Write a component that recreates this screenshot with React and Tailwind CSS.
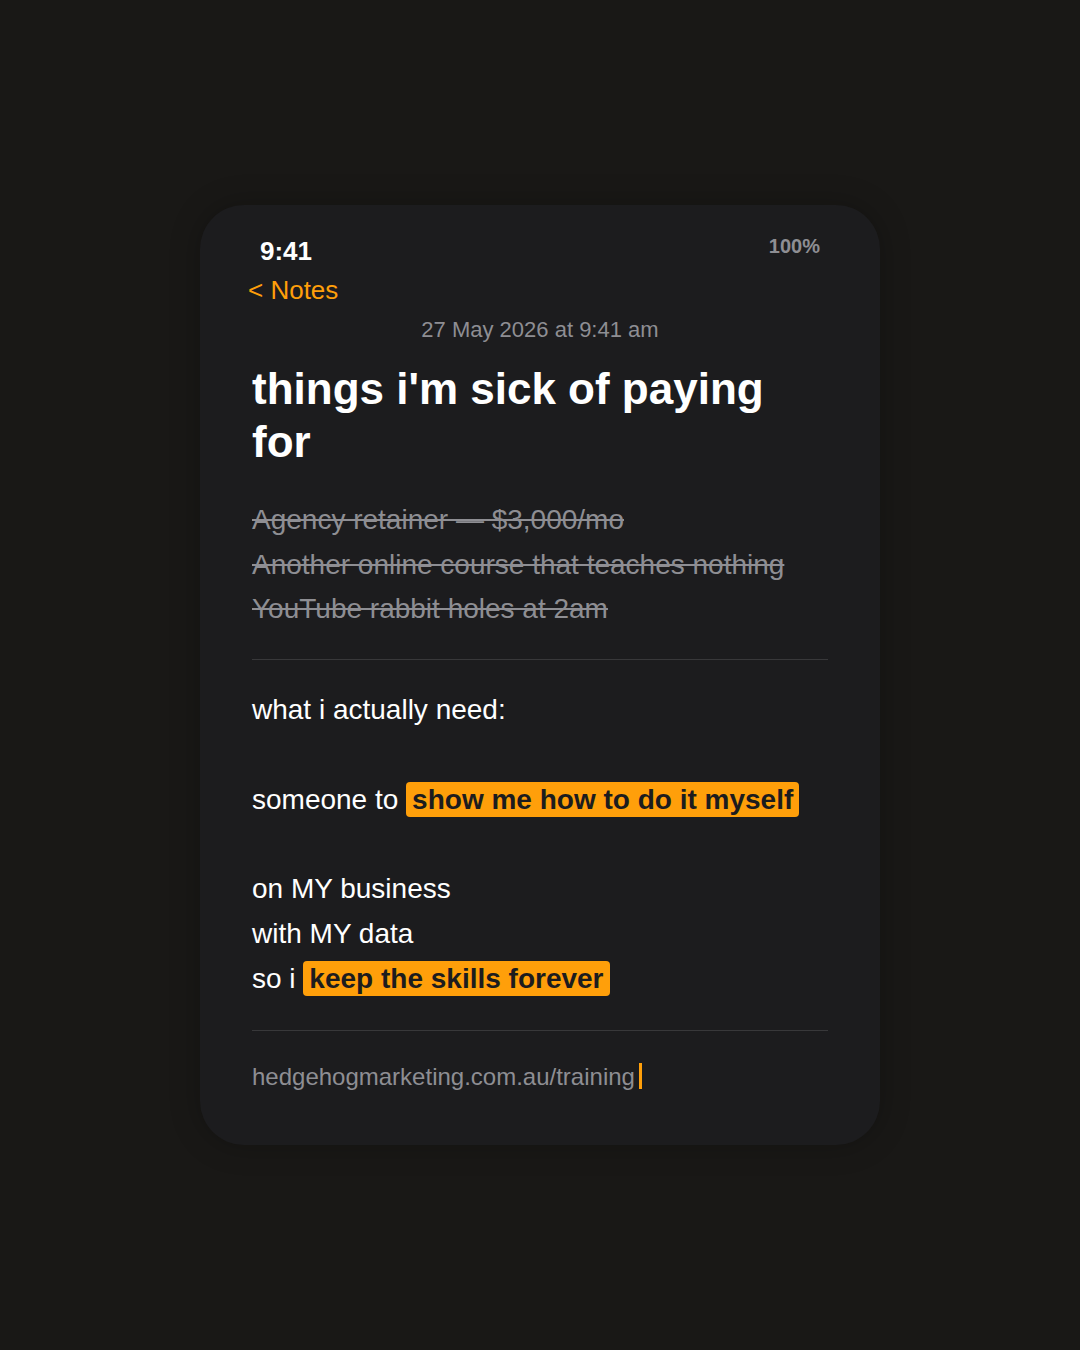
export default function App() {
  const struck = [
    "Agency retainer — $3,000/mo",
    "Another online course that teaches nothing",
    "YouTube rabbit holes at 2am",
  ];

  return (
    <div
      className="min-h-screen w-full bg-[#191816] flex items-center justify-center"
      style={{ fontFamily: '"Liberation Sans", Arial, sans-serif' }}
    >
      <div className="w-[680px] rounded-[44px] bg-[#1c1c1e] px-[52px] pt-[31px] pb-[50px] shadow-[0_0_30px_rgba(0,0,0,0.25)]">
        {/* status bar */}
        <div className="flex items-start justify-between px-2">
          <span className="text-[26px] leading-[30px] font-bold text-white">9:41</span>
          <span className="text-[20px] leading-[20px] font-bold text-[#8e8e93]">100%</span>
        </div>

        {/* back link */}
        <div className="mt-[9px] -ml-1 text-[26px] leading-[30px] text-[#ff9f0a]">&lt; Notes</div>

        {/* timestamp */}
        <div className="mt-[11px] text-center text-[22px] leading-[28px] text-[#8e8e93]">
          27 May 2026 at 9:41 am
        </div>

        {/* title */}
        <h1 className="mt-[19px] text-[44px] leading-[1.2] font-bold text-white">
          things i'm sick of paying for
        </h1>

        {/* crossed-off list */}
        <div className="mt-[29px] text-[28px] leading-[1.6] text-[#8e8e93]">
          {struck.map((s) => (
            <div key={s} className="line-through decoration-[#8e8e93]">
              {s}
            </div>
          ))}
        </div>

        <div className="mt-[27px] mb-[28px] h-px bg-[#38383a]" />

        {/* body */}
        <div className="text-[28px] leading-[1.6] text-white">
          <div>what i actually need:</div>
          <div>&nbsp;</div>
          <div>
            someone to{" "}
            <span className="rounded-[4px] bg-[#ff9f0a] px-[6px] py-[2px] font-bold text-[#1c1c1e]">
              show me how to do it myself
            </span>
          </div>
          <div>&nbsp;</div>
          <div>on MY business</div>
          <div>with MY data</div>
          <div>
            so i{" "}
            <span className="rounded-[4px] bg-[#ff9f0a] px-[6px] py-[2px] font-bold text-[#1c1c1e]">
              keep the skills forever
            </span>
          </div>
        </div>

        <div className="mt-[28px] mb-[28px] h-px bg-[#38383a]" />

        {/* link with caret */}
        <div className="text-[24px] leading-[1.5] text-[#8e8e93]">
          hedgehogmarketing.com.au/training
          <span className="ml-1 inline-block h-[26px] w-[3px] bg-[#ff9f0a] align-[-4px]" />
        </div>
      </div>
    </div>
  );
}
